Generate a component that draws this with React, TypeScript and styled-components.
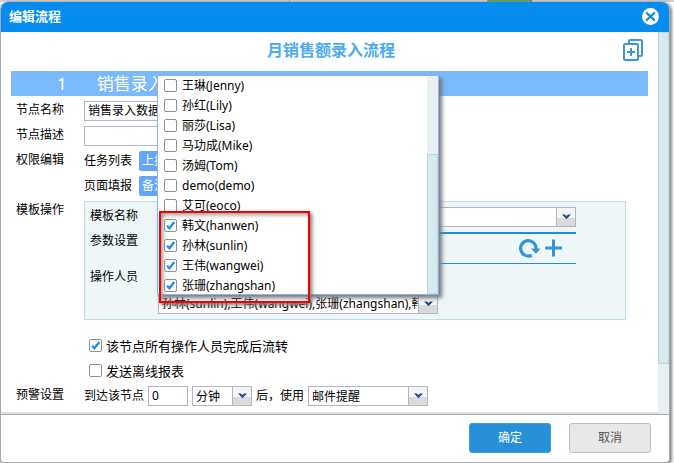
import React, { useState } from 'react';
import styled, { createGlobalStyle } from 'styled-components';

const GlobalStyle = createGlobalStyle`
  * { box-sizing: border-box; }
  body {
    margin: 0;
    background: #fff;
    color: #000;
    font: 12px/20px "Noto Sans", "Noto Sans CJK SC", sans-serif;
  }
  button, input, select { font: inherit; color: inherit; margin: 0; }
  fieldset, h1, h2 { margin: 0; padding: 0; border: 0; font-weight: 400; }
`;

const Page = styled.div`
  display: flex;
  flex-direction: column;
  overflow: hidden;
`;

const Backdrop = styled.div`
  height: 2px;
  background: #cfcfcf;
  display: grid;
  grid-template-columns: 43% 1fr 44px 21%;
`;

const BackdropCell = styled.span<{ $active?: boolean }>`
  background: ${(p) => (p.$active ? '#55a055' : 'transparent')};
  border-right: 1px solid ${(p) => (p.$active ? '#3d8040' : '#9a9a9a')};
  &:last-child { border-right: 0; }
`;

const Dialog = styled.section`
  margin: 0 4px 1px 0;
  background: #fff;
  border: solid #a3abb0;
  border-width: 0 1px 1px 1px;
  border-radius: 8px 8px 4px 4px;
  box-shadow: 1px 1px 3px 1px #888;
`;

const Header = styled.header`
  height: 30px;
  padding: 0 10px 2px 8px;
  display: flex;
  align-items: center;
  justify-content: space-between;
  background: #068cef;
  border-radius: 7px 7px 0 0;
`;

const DialogTitle = styled.h1`
  && { font-size: 13px; font-weight: 700; }
  color: #fff;
`;

const IconButton = styled.button`
  display: flex;
  padding: 0;
  border: 0;
  background: none;
  cursor: pointer;
`;

const Body = styled.div`
  display: grid;
  grid-template-columns: 1fr 11px;
  border-bottom: 1px solid #acacac;
  box-shadow: inset 0 -2px 1px #ddd;
`;

const Content = styled.div`
  min-width: 0;
  padding: 0 10px 8px;
`;

const Track = styled.div`
  background: #e8f0f2;
`;

const Thumb = styled.div<{ $size: string }>`
  height: ${(p) => p.$size};
  background: #d7ebee;
  border: 1px solid #b3d9de;
`;

const TitleBar = styled.div`
  height: 39px;
  display: grid;
  grid-template-columns: 28px 1fr 20px;
  align-items: center;
  padding: 0 5px 4px 0;
`;

const FlowTitle = styled.h2`
  && { font-size: 16px; font-weight: 700; }
  grid-column: 2;
  line-height: 24px;
  text-align: center;
  color: #4eacf2;
`;

const Banner = styled.div`
  height: 25px;
  display: flex;
  align-items: center;
  gap: 30px;
  padding-left: 46px;
  background: #7ab9fb;
  color: #fff;
  font-size: 17px;
  line-height: 24px;
`;

const Form = styled.div`
  display: flex;
  flex-direction: column;
  gap: 5px;
  padding: 5px 22px 0 5px;
`;

const FormRow = styled.div`
  display: grid;
  grid-template-columns: 68px 1fr;
  align-items: start;
`;

const Label = styled.label`
  line-height: 18px;
`;

const Inline = styled.div<{ $gap: number }>`
  display: flex;
  align-items: center;
  gap: ${(p) => p.$gap}px;
`;

const TextInput = styled.input<{ $width: number }>`
  width: ${(p) => p.$width}px;
  height: 20px;
  padding: 0 3px;
  border: 1px solid #b3b3c9;
  background: #fff;
  outline: 0;
`;

const Tag = styled.button`
  height: 20px;
  padding: 0 3px;
  border: 0;
  border-radius: 2px;
  background: #65a5fa;
  color: #fff;
  line-height: 20px;
`;

const ComboBox = styled.div<{ $width?: number }>`
  width: ${(p) => (p.$width ? `${p.$width}px` : 'auto')};
  height: 20px;
  position: relative;
  display: grid;
  grid-template-columns: 1fr 19px;
  background: #fff;
  border: 1px solid #b3b3c9;
`;

const Select = styled.select`
  appearance: none;
  grid-area: 1 / 1 / 2 / 3;
  min-width: 0;
  height: 18px;
  padding: 0 22px 0 3px;
  border: 0;
  outline: 0;
  background: transparent;
`;

const ComboInput = styled.input`
  min-width: 0;
  height: 18px;
  padding: 0 0 0 3px;
  border: 0;
  outline: 0;
  background: transparent;
`;

const arrowFace = `
  display: flex;
  align-items: center;
  justify-content: center;
  padding: 0;
  border: 0;
  border-left: 1px solid #b3b3b9;
  background: linear-gradient(#f4f4f4 0 55%, #dadada 55%);
`;

const ArrowFace = styled.span`
  ${arrowFace}
  grid-area: 1 / 2;
  pointer-events: none;
`;

const ArrowButton = styled.button`
  ${arrowFace}
`;

const Panel = styled.div`
  display: flex;
  flex-direction: column;
  padding: 5px 49px 5px 5px;
  background: #eef6f8;
  border: 1px solid #bbdfe6;
`;

const PanelRow = styled.div<{ $top?: number }>`
  display: grid;
  grid-template-columns: 68px 1fr;
  align-items: start;
  margin-top: ${(p) => p.$top ?? 0}px;
`;

const ParamBar = styled.div`
  height: 32px;
  display: flex;
  align-items: center;
  justify-content: flex-end;
  gap: 4px;
  padding: 0 14px 2px 0;
  border-top: 2px solid #1c8fd8;
  border-bottom: 1px solid #1c8fd8;
`;

const PeoplePicker = styled.div`
  position: relative;
  width: 280px;
  margin-top: 26px;
`;

const Popup = styled.div`
  position: absolute;
  z-index: 2;
  left: -1px;
  bottom: 19px;
  width: 282px;
  height: 220px;
  display: grid;
  grid-template-columns: 1fr 11px;
  background: #fff;
  border: 1px solid #8db4ee;
  box-shadow: 3px 3px 4px #777;
`;

const PeopleList = styled.fieldset`
  min-width: 0;
  height: 218px;
  display: flex;
  flex-direction: column;
  overflow: hidden;
`;

const PopupTrack = styled(Track)`
  display: flex;
  flex-direction: column;
  justify-content: flex-end;
`;

const CheckLabel = styled.label<{ $large?: boolean }>`
  display: flex;
  align-items: center;
  flex: none;
  height: 20px;
  gap: ${(p) => (p.$large ? 4 : 5)}px;
  padding-left: ${(p) => (p.$large ? 5 : 6)}px;
  font-size: ${(p) => (p.$large ? 13 : 12)}px;
  line-height: 20px;
`;

const CheckBoxShell = styled.span`
  display: grid;
  width: 13px;
  height: 15px;
  padding-bottom: 2px;
  svg { grid-area: 1 / 1; pointer-events: none; }
`;

const CheckInput = styled.input`
  appearance: none;
  grid-area: 1 / 1;
  width: 13px;
  height: 13px;
  border: 1px solid #8f8f8f;
  border-radius: 2px;
  background: #fff;
`;

const Highlight = styled.div`
  position: absolute;
  z-index: 3;
  left: 1px;
  bottom: 11px;
  width: 151px;
  height: 92px;
  border: 2px solid #f00000;
  box-shadow: 2px 2px 4px #777, inset 2px 2px 4px #999;
  pointer-events: none;
`;

const Options = styled.div`
  display: flex;
  flex-direction: column;
  gap: 5px;
  padding: 11px 0 0 68px;
`;

const Footer = styled.footer`
  height: 47px;
  display: flex;
  align-items: center;
  justify-content: flex-end;
  gap: 18px;
  padding: 0 18px 1px 0;
`;

const ActionButton = styled.button<{ $primary?: boolean }>`
  width: 82px;
  height: 30px;
  border: 1px solid ${(p) => (p.$primary ? '#3c9adb' : '#bfbfbf')};
  border-radius: 3px;
  background: ${(p) => (p.$primary ? '#2890d8' : '#e8e8e8')};
  color: ${(p) => (p.$primary ? '#fff' : '#555')};
`;

const Arrow = () => (
  <svg width="9" height="6" viewBox="0 0 9 6" aria-hidden="true">
    <path d="M0 0.5H3L4.5 2L6 0.5H9L4.5 5.2Z" fill="#2d4b8e" />
  </svg>
);

function Check({ label, initial = false, large }: { label: string; initial?: boolean; large?: boolean }) {
  const [on, setOn] = useState(initial);
  return (
    <CheckLabel $large={large}>
      <CheckBoxShell>
        <CheckInput type="checkbox" checked={on} onChange={() => setOn(!on)} />
        {on && (
          <svg width="13" height="13" viewBox="0 0 13 13" aria-hidden="true">
            <path d="M3 6.8L5.4 9.3L10.3 3" fill="none" stroke="#1d8ce6" strokeWidth="2.2" />
          </svg>
        )}
      </CheckBoxShell>
      {label}
    </CheckLabel>
  );
}

function Dropdown({ id, label, width, options }: { id: string; label?: string; width?: number; options: string[] }) {
  return (
    <ComboBox $width={width}>
      <Select id={id} aria-label={label}>
        {options.map((o) => (
          <option key={o}>{o}</option>
        ))}
      </Select>
      <ArrowFace><Arrow /></ArrowFace>
    </ComboBox>
  );
}

const people: [string, boolean][] = [
  ['王琳(Jenny)', false],
  ['孙红(Lily)', false],
  ['丽莎(Lisa)', false],
  ['马功成(Mike)', false],
  ['汤姆(Tom)', false],
  ['demo(demo)', false],
  ['艾可(eoco)', false],
  ['韩文(hanwen)', true],
  ['孙林(sunlin)', true],
  ['王伟(wangwei)', true],
  ['张珊(zhangshan)', true],
];

export default function App() {
  return (
    <Page>
      <GlobalStyle />
      <Backdrop>
        <BackdropCell />
        <BackdropCell />
        <BackdropCell $active />
        <BackdropCell />
      </Backdrop>
      <Dialog role="dialog" aria-labelledby="dialog-title">
        <Header>
          <DialogTitle id="dialog-title">编辑流程</DialogTitle>
          <IconButton aria-label="关闭">
            <svg width="17" height="17" viewBox="0 0 17 17">
              <circle cx="8.5" cy="8.5" r="8.5" fill="#fff" />
              <path d="M4.2 4.5L12.8 12.5M12.8 4.5L4.2 12.5" stroke="#068cd8" strokeWidth="2.2" />
            </svg>
          </IconButton>
        </Header>
        <Body>
          <Content>
            <TitleBar>
              <FlowTitle>月销售额录入流程</FlowTitle>
              <IconButton aria-label="添加节点">
                <svg width="20" height="22" viewBox="0 0 20 22" fill="none" stroke="#4196d8" strokeWidth="2">
                  <path d="M6 4V2Q6 1 7 1H18Q19 1 19 2V16Q19 17 18 17H16" />
                  <rect x="1" y="5" width="14" height="16" rx="1" />
                  <path d="M4 13H12M8 9V17" />
                </svg>
              </IconButton>
            </TitleBar>
            <Banner>
              <span>1</span>
              <span>销售录入数据</span>
            </Banner>
            <Form>
              <FormRow>
                <Label htmlFor="node-name">节点名称</Label>
                <TextInput id="node-name" $width={160} defaultValue="销售录入数据" />
              </FormRow>
              <FormRow>
                <Label htmlFor="node-desc">节点描述</Label>
                <TextInput id="node-desc" $width={160} />
              </FormRow>
              <FormRow>
                <Label as="span">权限编辑</Label>
                <Inline $gap={7}>任务列表<Tag>上报</Tag></Inline>
              </FormRow>
              <FormRow>
                <span />
                <Inline $gap={7}>页面填报<Tag>备注</Tag></Inline>
              </FormRow>
              <FormRow>
                <Label as="span">模板操作</Label>
                <Panel>
                  <PanelRow>
                    <Label htmlFor="template">模板名称</Label>
                    <Dropdown id="template" options={['']} />
                  </PanelRow>
                  <PanelRow $top={5}>
                    <Label as="span">参数设置</Label>
                    <ParamBar>
                      <IconButton aria-label="刷新">
                        <svg width="22" height="20" viewBox="0 0 22 20">
                          <path d="M12.8 17.2A7.7 7.7 0 1 1 17 11" fill="none" stroke="#3496d0" strokeWidth="3.2" />
                          <path d="M12 10.5H21.5L17 15.8Z" fill="#3496d0" />
                        </svg>
                      </IconButton>
                      <IconButton aria-label="添加参数">
                        <svg width="17" height="18" viewBox="0 0 17 18">
                          <path d="M0 9H17M8.5 0.5V17.5" stroke="#3496d0" strokeWidth="3" />
                        </svg>
                      </IconButton>
                    </ParamBar>
                  </PanelRow>
                  <PanelRow $top={4}>
                    <Label htmlFor="operators">操作人员</Label>
                    <PeoplePicker>
                      <ComboBox>
                        <ComboInput
                          id="operators"
                          readOnly
                          value="孙林(sunlin),王伟(wangwei),张珊(zhangshan),韩文(hanwen)"
                        />
                        <ArrowButton aria-label="展开操作人员"><Arrow /></ArrowButton>
                      </ComboBox>
                      <Popup>
                        <PeopleList aria-label="操作人员">
                          {people.map(([name, on]) => (
                            <Check key={name} label={name} initial={on} />
                          ))}
                        </PeopleList>
                        <PopupTrack><Thumb $size="140px" /></PopupTrack>
                      </Popup>
                      <Highlight />
                    </PeoplePicker>
                  </PanelRow>
                </Panel>
              </FormRow>
              <Options>
                <Check large initial label="该节点所有操作人员完成后流转" />
                <Check large label="发送离线报表" />
              </Options>
              <FormRow>
                <Label as="span">预警设置</Label>
                <Inline $gap={4}>
                  <Label htmlFor="delay">到达该节点</Label>
                  <TextInput id="delay" $width={40} defaultValue="0" />
                  <Dropdown id="unit" label="时间单位" width={60} options={['分钟']} />
                  <Label htmlFor="remind">后，使用</Label>
                  <Dropdown id="remind" width={120} options={['邮件提醒']} />
                </Inline>
              </FormRow>
            </Form>
          </Content>
          <Track><Thumb $size="87%" /></Track>
        </Body>
        <Footer>
          <ActionButton $primary>确定</ActionButton>
          <ActionButton>取消</ActionButton>
        </Footer>
      </Dialog>
    </Page>
  );
}
